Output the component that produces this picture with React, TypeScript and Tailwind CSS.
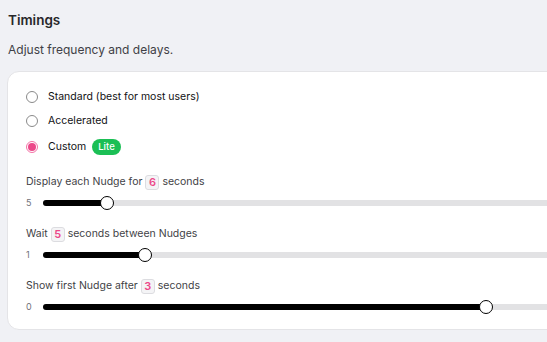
import { ReactNode } from 'react';

const font = { fontFamily: 'Inter, "Noto Sans", sans-serif' };

function Radio({ label, checked, children }: { label: string; checked?: boolean; children?: ReactNode }) {
  return (
    <div className="flex items-center h-[16px]">
      {checked ? (
        <span className="w-[12px] h-[12px] rounded-full border border-[#f472a6] flex items-center justify-center">
          <span className="w-[8px] h-[8px] rounded-full bg-[#ec4889]" />
        </span>
      ) : (
        <span className="w-[12px] h-[12px] rounded-full border border-[#8a8a8a] bg-white" />
      )}
      <span className="ml-[10px] text-[10.5px] font-normal text-[#111114]">{label}</span>
      {children}
    </div>
  );
}

function Num({ v }: { v: number }) {
  return (
    <span className="inline-flex items-center justify-center mx-[3px] w-[14px] h-[15px] rounded-[3px] border border-[#dcdce0] bg-[#f4f4f6] text-[#ec4889] font-semibold text-[11px]">
      {v}
    </span>
  );
}

function Slider({ min, fill }: { min: number; fill: number }) {
  return (
    <div className="flex items-center h-[16px]">
      <span className="w-[17px] text-[9px] text-[#71717a]">{min}</span>
      <div className="relative flex-1 h-[6px] rounded-full bg-[#e2e2e4]">
        <div className="absolute left-0 top-0 h-[6px] rounded-full bg-black" style={{ width: fill }} />
        <div
          className="absolute top-[-4px] w-[14px] h-[14px] rounded-full bg-white border-[1.5px] border-black"
          style={{ left: fill - 7 }}
        />
      </div>
    </div>
  );
}

function Label({ children }: { children: ReactNode }) {
  return <div className="flex items-center text-[10.5px] text-[#3f3f46] h-[16px]">{children}</div>;
}

export default function App() {
  return (
    <div className="w-[547px] h-[342px] overflow-hidden bg-[#f0f1f5]" style={font}>
      <div className="pl-[8px] pt-[11px]">
        <h2 className="text-[13.5px] font-semibold text-[#27272a] leading-[18px]">Timings</h2>
        <p className="mt-[13px] text-[12px] text-[#3f3f46] leading-[16px]">Adjust frequency and delays.</p>
      </div>
      <div className="ml-[7px] mt-[13px] w-[640px] h-[259px] bg-white rounded-[12px] border border-[#e4e4e7] pl-[18px] pr-[40px] pt-[17px]">
        <div className="flex flex-col gap-[8px]">
          <Radio label="Standard (best for most users)" />
          <Radio label="Accelerated" />
          <div className="mt-[2px]">
            <Radio label="Custom" checked>
              <span className="ml-[6px] px-[6px] h-[16px] rounded-full bg-[#1bbf55] text-white text-[9.5px] font-medium flex items-center">
                Lite
              </span>
            </Radio>
          </div>
        </div>
        <div className="mt-[19px] flex flex-col">
          <Label>
            Display each Nudge for <Num v={6} /> seconds
          </Label>
          <div className="mt-[5px]">
            <Slider min={5} fill={64} />
          </div>
          <div className="mt-[15px]">
            <Label>
              Wait <Num v={5} /> seconds between Nudges
            </Label>
          </div>
          <div className="mt-[5px]">
            <Slider min={1} fill={102} />
          </div>
          <div className="mt-[15px]">
            <Label>
              Show first Nudge after <Num v={3} /> seconds
            </Label>
          </div>
          <div className="mt-[5px]">
            <Slider min={0} fill={443} />
          </div>
        </div>
      </div>
    </div>
  );
}
